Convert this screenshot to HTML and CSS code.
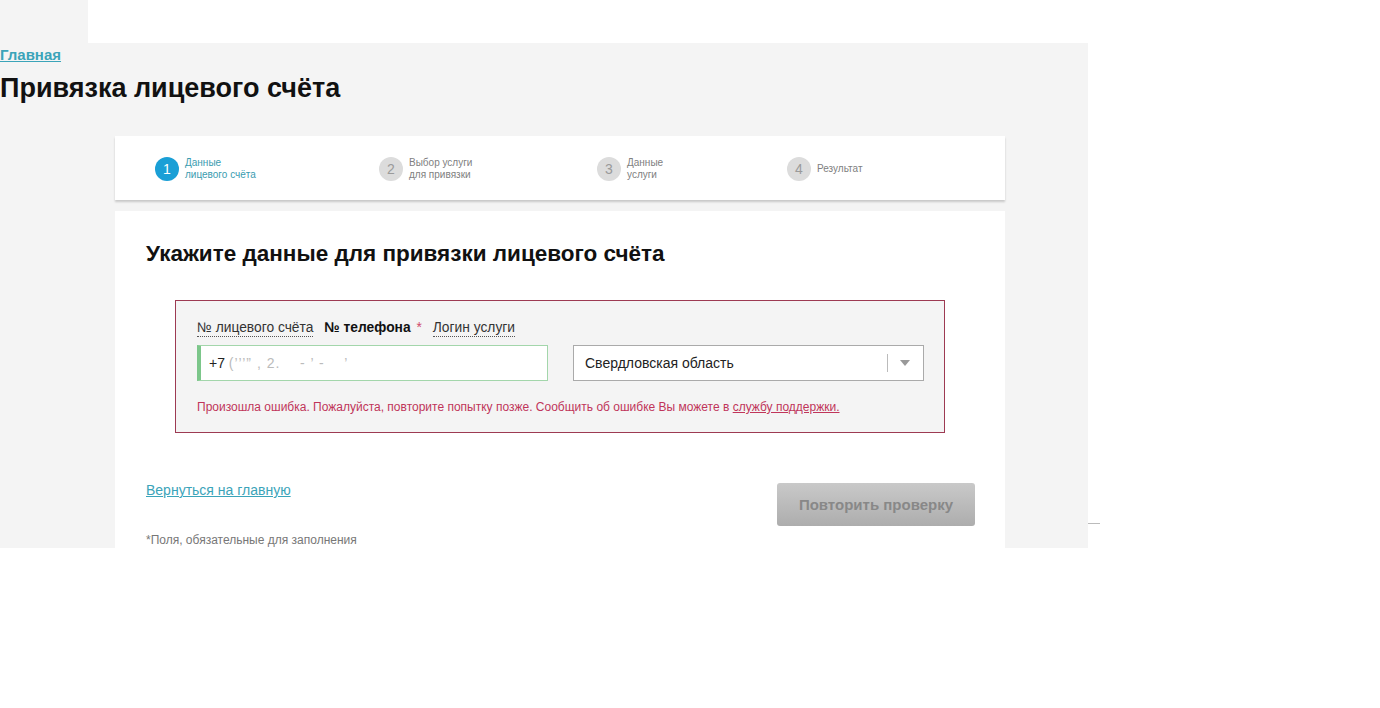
FILE: index.html
```html
<!DOCTYPE html>
<html lang="ru">
<head>
  <meta charset="UTF-8">
  <title>Привязка лицевого счёта</title>
  <link rel="stylesheet" href="styles.css">
</head>
<body>

  <div class="page">
    <div class="notch"></div>

    <a class="crumb" href="#">Главная</a>
    <h1 class="page-title">Привязка лицевого счёта</h1>

    <!-- steps -->
    <div class="card steps">
      <div class="step active">
        <span class="step-num">1</span>
        <span class="step-label">Данные<br>лицевого счёта</span>
      </div>
      <div class="step">
        <span class="step-num">2</span>
        <span class="step-label">Выбор услуги<br>для привязки</span>
      </div>
      <div class="step">
        <span class="step-num">3</span>
        <span class="step-label">Данные<br>услуги</span>
      </div>
      <div class="step">
        <span class="step-num">4</span>
        <span class="step-label">Результат</span>
      </div>
    </div>

    <div class="card main">
      <h2 class="form-title">Укажите данные для привязки лицевого счёта</h2>

      <div class="error-box">
        <div class="tabs">
          <a class="tab" href="#">№ лицевого счёта</a>
          <span class="tab current">№ телефона <i class="req">*</i></span>
          <a class="tab" href="#">Логин услуги</a>
        </div>

        <div class="fields">
          <div class="input ok">+7 <span class="hidden-num">(&#8217;&#8217;&#8217;&#8221; , 2.&nbsp;&nbsp;&nbsp; - &#8217; -&nbsp;&nbsp;&nbsp; &#8217;</span></div>
          <div class="select">
            <span>Свердловская область</span>
            <span class="select-arrow"></span>
          </div>
        </div>

        <p class="error-text">Произошла ошибка. Пожалуйста, повторите попытку позже. Сообщить об ошибке Вы можете в <a href="#">службу поддержки.</a></p>
      </div>

      <div class="form-bottom">
        <div>
          <a class="back-link" href="#">Вернуться на главную</a>
          <p class="note">*Поля, обязательные для заполнения</p>
        </div>
        <button class="retry-btn" disabled>Повторить проверку</button>
      </div>
    </div>
  </div>

  <div class="edge-line"></div>

</body>
</html>
```

FILE: styles.css
```css
body {
  margin: 0;
  background: #fff;
  font-family: "Liberation Sans", Arial, sans-serif;
  color: #222;
  height: 708px;
}

.page {
  width: 1088px;
  height: 548px;
  background: #f4f4f4;
  overflow: hidden;
}

.notch {
  height: 43px;
  margin-left: 88px;
  background: #fff;
}

.crumb {
  display: block;
  width: max-content;
  margin-top: 2px;
  font-size: 15px;
  line-height: 20px;
  font-weight: bold;
  color: #3ba4b9;
}

.page-title {
  margin: 6px 0 0;
  font-size: 27px;
  line-height: 34px;
  font-weight: bold;
  color: #111;
}

.card {
  width: 890px;
  margin-left: 115px;
  background: #fff;
}

/* steps */
.steps {
  margin-top: 31px;
  height: 64px;
  box-sizing: border-box;
  padding: 2px 0 0 40px;
  display: grid;
  grid-template-columns: 224px 218px 190px auto;
  align-items: center;
  box-shadow: 0 2px 2px rgba(0, 0, 0, 0.18);
}

.step {
  display: flex;
  align-items: center;
  gap: 6px;
}

.step-num {
  width: 24px;
  height: 24px;
  border-radius: 50%;
  background: #dcdcdc;
  color: #9a9a9a;
  font-size: 14px;
  line-height: 24px;
  text-align: center;
}

.step-label {
  font-size: 10px;
  line-height: 12px;
  color: #808080;
}

.step.active .step-num {
  background: #1a9fd6;
  color: #fff;
}

.step.active .step-label {
  color: #3a9cb0;
}

/* main form */
.main {
  margin-top: 11px;
  height: 400px;
  box-sizing: border-box;
  padding: 29px 30px 0 31px;
}

.form-title {
  margin: 0;
  font-size: 22.5px;
  line-height: 28px;
  font-weight: bold;
  color: #111;
}

.error-box {
  width: 770px;
  box-sizing: border-box;
  margin: 32px 0 0 29px;
  padding: 19px 20px 17px 21px;
  border: 1px solid #9d3a52;
  background: #f4f4f4;
}

.tabs {
  display: flex;
  gap: 11px;
  font-size: 13.8px;
  line-height: 16px;
}

.tab {
  color: #333;
  text-decoration: none;
  border-bottom: 1px dotted #555;
}

.tab.current {
  border-bottom: none;
  font-weight: bold;
  color: #111;
}

.req {
  font-style: normal;
  font-weight: normal;
  color: #d04a6a;
  margin-left: 2px;
}

.fields {
  display: flex;
  gap: 25px;
  margin-top: 8px;
}

.input,
.select {
  width: 352px;
  height: 36px;
  box-sizing: border-box;
  background: #fff;
  font-size: 14px;
  line-height: 34px;
  color: #222;
}

.input.ok {
  border: 1px solid #a3d6ab;
  border-left: 4px solid #7cc68a;
  padding-left: 8px;
}

.hidden-num {
  color: #bbb;
  letter-spacing: 1px;
}

.select {
  position: relative;
  border: 1px solid #aaa;
  padding-left: 11px;
}

.select-arrow {
  position: absolute;
  right: 35px;
  top: 8px;
  height: 18px;
  border-left: 1px solid #bbb;
}

.select-arrow::after {
  content: "";
  position: absolute;
  left: 12px;
  top: 6px;
  border-left: 5px solid transparent;
  border-right: 5px solid transparent;
  border-top: 6px solid #999;
}

.error-text {
  margin: 18px 0 0;
  font-size: 12px;
  line-height: 16px;
  color: #c0355a;
}

.error-text a {
  color: #c0355a;
}

.form-bottom {
  display: flex;
  justify-content: space-between;
  align-items: flex-start;
  margin-top: 49px;
}

.back-link {
  display: block;
  font-size: 14px;
  line-height: 16px;
  color: #3ba4b9;
}

.note {
  margin: 35px 0 0;
  font-size: 12px;
  line-height: 14px;
  color: #777;
}

.retry-btn {
  width: 198px;
  height: 43px;
  margin-top: 1px;
  border: none;
  border-radius: 3px;
  background: linear-gradient(#c9c9c9, #adadad);
  color: #888;
  font-family: "Liberation Sans", Arial, sans-serif;
  font-size: 15px;
  font-weight: bold;
}

/* small grey tick at the right edge of the panel */
.edge-line {
  position: absolute;
  left: 1088px;
  top: 523px;
  width: 12px;
  border-top: 1px solid #bbb;
}
```
